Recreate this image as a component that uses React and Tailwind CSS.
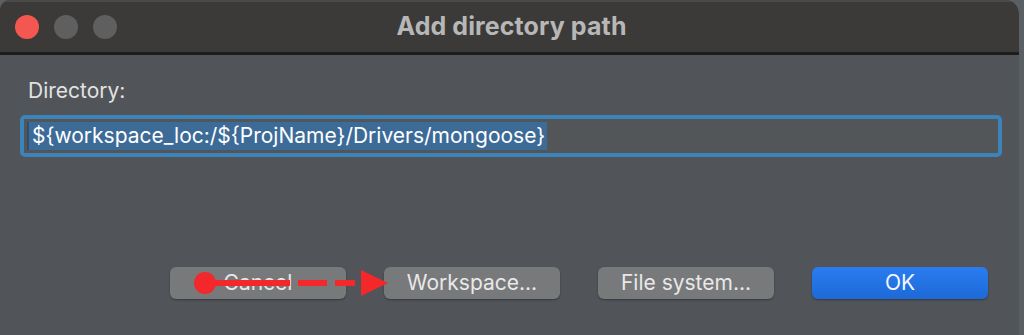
export default function App() {
  const buttons = ['Cancel', 'Workspace...', 'File system...'];

  return (
    <div className="w-[1024px] h-[335px] bg-[#5a5f63] overflow-hidden" style={{ fontFamily: 'Inter, "Noto Sans", sans-serif' }}>
      <div className="w-[1019px] h-[335px] flex flex-col bg-[#515559] rounded-tr-[14px] rounded-tl-[10px] overflow-hidden">
        {/* title bar */}
        <div className="relative h-[52px] shrink-0 bg-[#3b3a39] border-t-2 border-[#4a4a4a] flex items-center">
          <div className="flex items-center gap-[15px] pl-[15px]">
            <span className="w-[24px] h-[24px] rounded-full bg-[#f4574f]" />
            <span className="w-[24px] h-[24px] rounded-full bg-[#5f5f5f]" />
            <span className="w-[24px] h-[24px] rounded-full bg-[#5f5f5f]" />
          </div>
          <div className="absolute inset-0 flex items-center justify-center pl-[4px]">
            <span className="text-[25px] font-bold text-[#b7b7b7] tracking-[0.1px]">Add directory path</span>
          </div>
        </div>
        <div className="h-[3px] shrink-0 bg-[#1d1d1d]" />

        {/* body */}
        <div className="flex flex-col px-[20px] pt-[22px]">
          <div className="pl-[8px] text-[21px] text-[#e2e2e2] leading-[28px]">Directory:</div>
          <div className="mt-[10px] w-[982px] h-[42px] rounded-[5px] border-[4px] border-[#3b83b8] bg-[#525659] flex items-center px-[3px]">
            <span className="h-[28px] flex items-center bg-[#3d6b98] text-[21px] text-white pl-[3px] pr-[2px] border-l-2 border-[#2e4f6e]">
              {'${workspace_loc:/${ProjName}/Drivers/mongoose}'}
            </span>
          </div>
        </div>

        {/* buttons */}
        <div className="relative mt-[110px] flex gap-[38px] pl-[170px]">
          {buttons.map(label => (
            <button key={label} className="w-[176px] h-[32px] rounded-[6px] bg-[#78797b] text-[21px] text-[#e8e8e8] shadow-[0_1px_2px_rgba(0,0,0,0.35)] flex items-center justify-center">
              {label}
            </button>
          ))}
          <button className="w-[176px] h-[32px] rounded-[6px] bg-gradient-to-b from-[#2a7cf0] to-[#1d6ad8] text-[21px] text-[#f2f6ff] shadow-[0_1px_2px_rgba(0,0,0,0.35)] flex items-center justify-center">
            OK
          </button>

          {/* red annotation arrow */}
          <svg className="absolute left-[180px] top-[2px]" width="220" height="30" viewBox="0 0 220 30">
            <circle cx="25" cy="14" r="11" fill="#f2282b" />
            <line x1="25" y1="14" x2="110" y2="14" stroke="#f2282b" strokeWidth="6" />
            <line x1="118" y1="14" x2="147" y2="14" stroke="#f2282b" strokeWidth="6" />
            <line x1="155" y1="14" x2="175" y2="14" stroke="#f2282b" strokeWidth="6" />
            <polygon points="181,1 208,14 181,27" fill="#f2282b" />
          </svg>
        </div>
      </div>
    </div>
  );
}
